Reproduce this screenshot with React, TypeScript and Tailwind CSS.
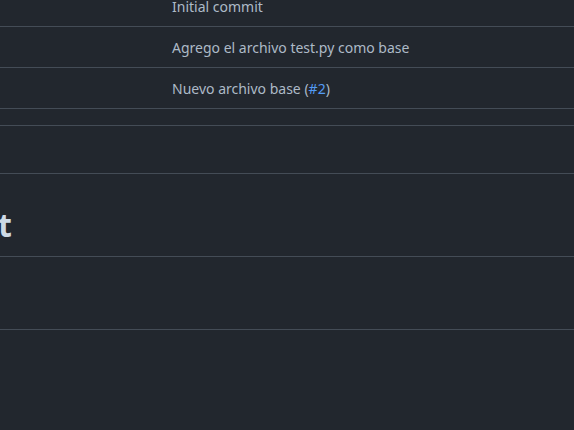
const commits = [
  { text: "Initial commit" },
  { text: "Agrego el archivo test.py como base" },
  { text: "Nuevo archivo base", pr: "#2" },
];

export default function App() {
  return (
    <div
      className="h-[430px] w-[574px] overflow-hidden bg-[#22272e] text-[#adbac7]"
      style={{ fontFamily: '"Noto Sans", "Open Sans", sans-serif' }}
    >
      {/* Commit list */}
      <div className="-mt-[14px]">
        {commits.map((c) => (
          <div
            key={c.text}
            className="flex h-[41px] items-center border-b border-[#444c56] pl-[172px] pt-[2px] text-sm"
          >
            <span>
              {c.text}
              {c.pr && (
                <>
                  {" ("}
                  <span className="text-[#539bf5]">{c.pr}</span>
                  {")"}
                </>
              )}
            </span>
          </div>
        ))}
      </div>

      <div className="h-[17px] border-b border-[#444c56]" />
      <div className="h-[48px] border-b border-[#444c56]" />

      {/* Heading, cut at the left edge */}
      <div className="flex h-[83px] items-center border-b border-[#444c56] pt-[20px]">
        <div className="flex w-[12px] justify-end overflow-hidden">
          <h2 className="whitespace-nowrap text-[32px] font-bold leading-none text-[#cdd9e5]">
            Latest
          </h2>
        </div>
      </div>

      <div className="h-[73px] border-b border-[#444c56]" />
    </div>
  );
}
